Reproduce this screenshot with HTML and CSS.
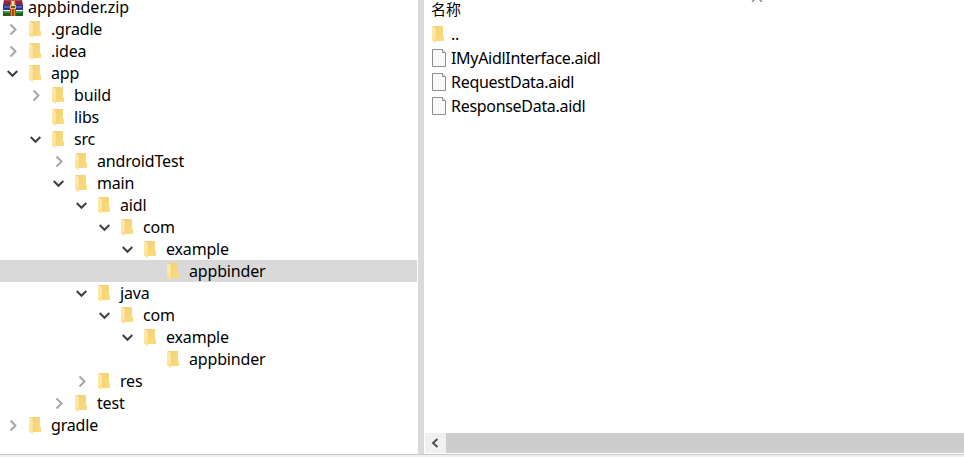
FILE: index.html
```
<!DOCTYPE html>
<html lang="zh-CN">
<head>
<meta charset="utf-8">
<title>appbinder.zip</title>
<link rel="stylesheet" href="styles.css">
</head>
<body>
<svg width="0" height="0" class="defs">
  <defs>
    <linearGradient id="gold" x1="0" y1="0" x2="1" y2="0.6"><stop offset="0" stop-color="#f3cf78"/><stop offset=".5" stop-color="#f6d47a"/><stop offset="1" stop-color="#fadb7e"/></linearGradient>
    <linearGradient id="flap" x1="0" y1="0" x2="0" y2="1"><stop offset="0" stop-color="#ffebb0"/><stop offset="1" stop-color="#ffe08f"/></linearGradient>
    <symbol id="folder" viewBox="0 0 13 17"><path d="M.5 0H11V10H12V15H3L.5 14Z" fill="url(#gold)"/><path d="M0 .4L.6 0 3.8 2.4V17L0 14.7Z" fill="url(#flap)"/></symbol>
    <symbol id="right" viewBox="0 0 12 12"><path d="M3.5 1.5L8.5 6.5 3.5 11.5" fill="none" stroke="#a6a6a6" stroke-width="2"/></symbol>
    <symbol id="down" viewBox="0 0 12 12"><path d="M.7 4L5.5 8.8 10.3 4" fill="none" stroke="#404040" stroke-width="2"/></symbol>
    <symbol id="file" viewBox="0 0 14 18"><path d="M.5 .5H10.5L13.5 3.5V17.5H.5Z" fill="#f8f9f9" stroke="#8c8c8c"/><path d="M10.5 .5V3.5H13.5" fill="#fff" stroke="#8c8c8c"/></symbol>
  </defs>
</svg>
<div class="window">
  <main class="panes">
    <nav class="tree" id="tree">
      <div class="row root">
        <svg class="archive" viewBox="0 0 20 16"><path fill="#8d2645" d="M1 0H19L20 5H0Z"/><path fill="#b24462" d="M2 0H18V1H2Z"/><path fill="#26348e" d="M0 5H20V10H0Z"/><path fill="#4a64c8" d="M1 6H19V8H1Z"/><path fill="#176126" d="M0 11H20V16H0Z"/><path fill="#419e4c" d="M1 11H19V13H1Z"/><path fill="#a64c16" d="M7 0H13V16H7Z"/><path fill="#e18b36" d="M8 0H9V16H8ZM11 0H12V16H11Z"/><path fill="#f0bd55" d="M7 5H13V9H7Z"/><path fill="#75531f" d="M8 6H12V8H8Z"/><path fill="#ddd" d="M9 1H11V6H9Z"/></svg>
        <span class="root-name">appbinder.zip</span>
      </div>
    </nav>
    <div class="splitter"></div>
    <section class="files">
      <header class="column">名称<svg class="sort" viewBox="0 0 12 6"><path d="M1 6L6 1 11 6" fill="none" stroke="#777" stroke-width="1.2"/></svg></header>
      <div class="entry"><svg class="folder"><use href="#folder"/></svg><span>..</span></div>
      <div class="entry"><svg class="file"><use href="#file"/></svg><span>IMyAidlInterface.aidl</span></div>
      <div class="entry"><svg class="file"><use href="#file"/></svg><span>RequestData.aidl</span></div>
      <div class="entry"><svg class="file"><use href="#file"/></svg><span>ResponseData.aidl</span></div>
      <div class="scrollbar"><div class="arrow"><svg viewBox="0 0 8 10"><path d="M6.5 1L2 5 6.5 9" fill="none" stroke="#505050" stroke-width="2"/></svg></div><div class="thumb"></div></div>
    </section>
  </main>
  <footer class="status"></footer>
</div>
<script src="tree.js"></script>
</body>
</html>
```
FILE: styles.css
```
* { box-sizing: border-box; }
body { margin: 0; background: #fff; color: #000; font: 16px/22px "Noto Sans", "Noto Sans CJK SC", sans-serif; overflow: hidden; }
svg { display: block; flex: none; }
.defs { position: absolute; }
.window { height: 457px; display: flex; flex-direction: column; }
.panes { display: flex; height: 454px; }
.tree { width: 418px; height: 454px; letter-spacing: -0.17px; }
.row { display: flex; align-items: center; height: 22px; width: 417px; padding-left: calc(7px + var(--level, 0) * 23px); white-space: nowrap; }
.row.root { height: 18px; padding-left: 3px; align-items: flex-start; line-height: 14px; letter-spacing: 0; }
.row.selected { background: #d9d9d9; }
.archive { width: 20px; height: 16px; margin-right: 5px; }
.chevron { width: 12px; height: 12px; margin-right: 10px; }
.folder { width: 13px; height: 17px; margin-right: 9px; }
.splitter { width: 6px; background: #dadada; }
.files { width: 540px; height: 454px; display: flex; flex-direction: column; padding-left: 1px; letter-spacing: -0.3px; }
.column { height: 22px; padding: 0 0 0 6px; font: 15px/18px "Noto Sans CJK SC", sans-serif; letter-spacing: 0; display: flex; }
.sort { width: 12px; height: 6px; margin: -4px 0 0 290px; }
.entry { display: flex; align-items: center; height: 24px; padding-left: 7px; white-space: nowrap; }
.entry .folder { margin-right: 6px; }
.file { width: 14px; height: 18px; margin-right: 5px; }
.scrollbar { display: flex; height: 20px; margin-top: auto; margin-bottom: 1px; background: #cdcdcd; }
.arrow { width: 21px; background: #f0f0f0; display: flex; align-items: center; justify-content: center; padding-right: 2px; }
.arrow svg { width: 8px; height: 10px; }
.thumb { flex: 1; background: #cdcdcd; }
.status { height: 3px; background: #f0f0f0; border-top: 1px solid #c8c8c8; }
```
FILE: tree.js
```
const rows = [
  [0, "right", ".gradle"], [0, "right", ".idea"], [0, "down", "app"],
  [1, "right", "build"], [1, "", "libs"], [1, "down", "src"],
  [2, "right", "androidTest"], [2, "down", "main"], [3, "down", "aidl"],
  [4, "down", "com"], [5, "down", "example"], [6, "", "appbinder", true],
  [3, "down", "java"], [4, "down", "com"], [5, "down", "example"],
  [6, "", "appbinder"], [3, "right", "res"], [2, "right", "test"], [0, "right", "gradle"]
];
document.getElementById("tree").insertAdjacentHTML("beforeend", rows.map(([level, chevron, name, selected]) =>
  `<div class="row${selected ? " selected" : ""}" style="--level:${level}"><svg class="chevron">${chevron ? `<use href="#${chevron}"/>` : ""}</svg><svg class="folder"><use href="#folder"/></svg><span>${name}</span></div>`).join(""));
```
